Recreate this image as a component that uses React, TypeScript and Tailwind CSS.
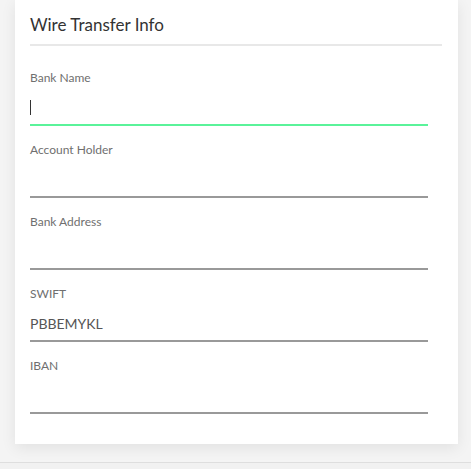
import React from "react";

const fields: { label: string; value: string; focused?: boolean }[] = [
  { label: "Bank Name", value: "", focused: true },
  { label: "Account Holder", value: "" },
  { label: "Bank Address", value: "" },
  { label: "SWIFT", value: "PBBEMYKL" },
  { label: "IBAN", value: "" },
];

export default function App() {
  return (
    <div className="w-[471px] h-[469px] bg-[#f4f4f4] overflow-hidden" style={{ fontFamily: "Lato, 'Noto Sans', sans-serif" }}>
      <div className="ml-[15px] w-[443px] bg-white pt-[13px] pb-[30px] pl-[15px] pr-[16px] shadow-[0_4px_14px_rgba(0,0,0,0.08)]">
        <div className="h-[24px] leading-[24px] text-[17px] text-[#333]">Wire Transfer Info</div>
        <div className="mt-[7px] h-[2px] bg-[#e8e8e8]" />
        <div className="mt-[24px] mr-[14px] flex flex-col gap-[16px]">
          {fields.map((f) => (
            <div key={f.label} className="flex flex-col">
              <div className="h-[16px] leading-[16px] text-[12px] text-[#6f6f6f]">{f.label}</div>
              <div
                className={
                  "h-[40px] flex items-center pt-[5px] border-b-2 " +
                  (f.focused ? "border-[#5af39a]" : "border-[#999999]")
                }
              >
                {f.focused ? (
                  <div className="w-px h-[15px] bg-[#333]" />
                ) : (
                  <span className="text-[14px] text-[#555]">{f.value}</span>
                )}
              </div>
            </div>
          ))}
        </div>
      </div>
      <div className="mt-[18px] border-t border-[#dedede] h-[20px] bg-[#f1f1f1]" />
    </div>
  );
}
